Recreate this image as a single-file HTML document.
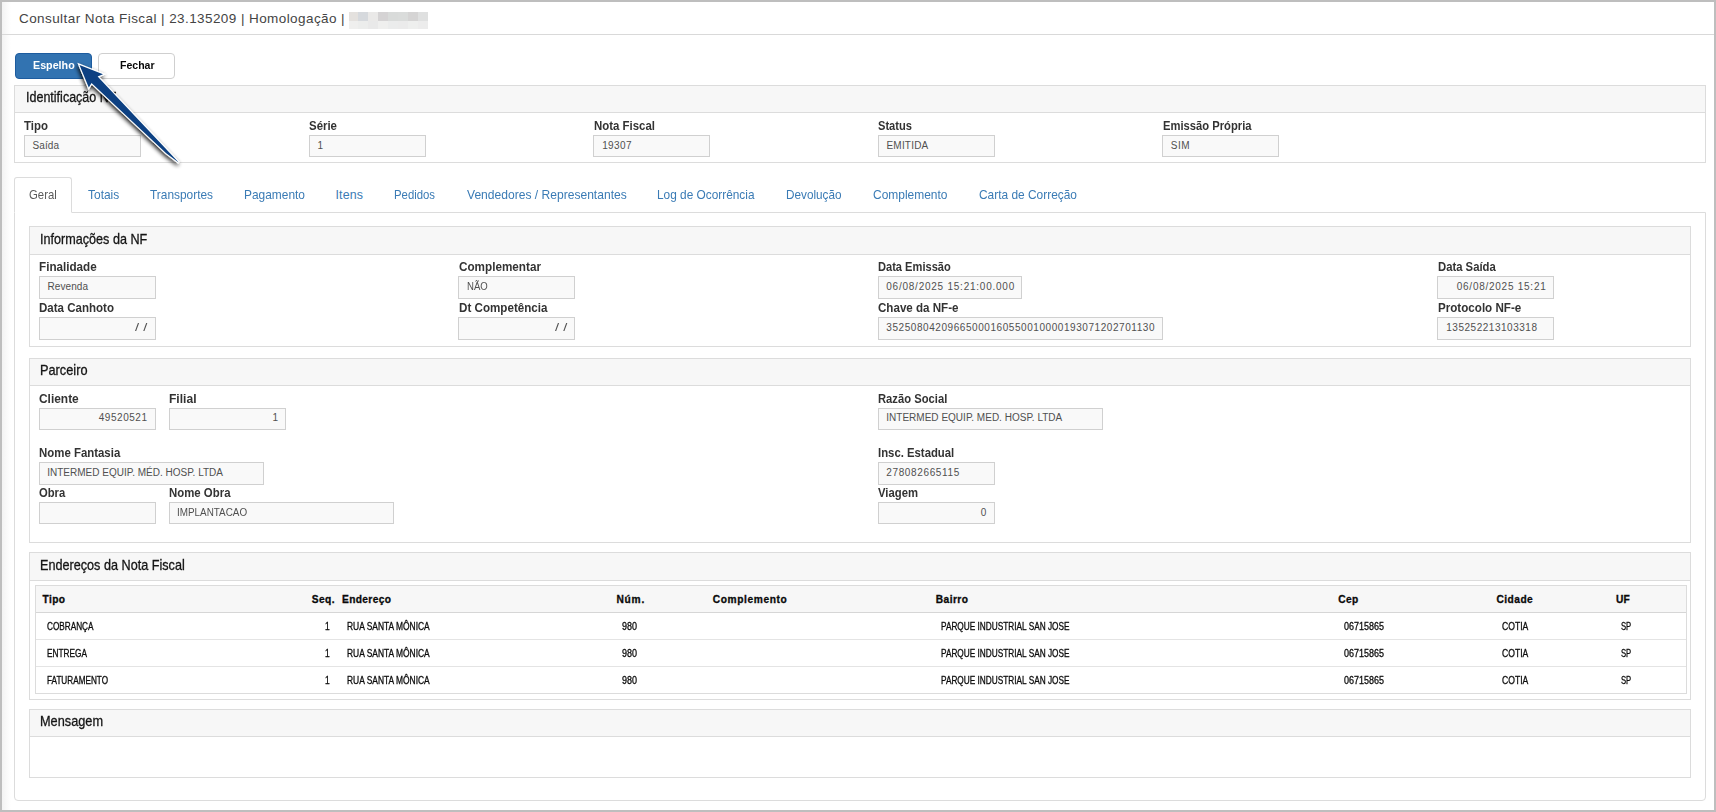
<!DOCTYPE html>
<html lang="pt-br"><head><meta charset="utf-8"><title>Consultar Nota Fiscal</title>
<style>
html,body{margin:0;padding:0;background:#fff}
body{width:1716px;height:812px;font-family:"Liberation Sans",sans-serif}
#page{position:relative;width:1716px;height:812px;overflow:hidden;background:#fff}
#frame{position:absolute;left:0;top:0;width:1716px;height:812px;box-sizing:border-box;border:2px solid #bebebe;background:linear-gradient(to right,#f3f3f3 0,#fff 9px) no-repeat 0 0/12px 100% #fff}
.b{position:absolute;box-sizing:border-box}
.inp{background:#f9f9f9;border:1px solid #d0d0d0}
.t{position:absolute;white-space:nowrap;line-height:20px;transform-origin:0 50%;display:block}
.title{font-size:13.5px;font-weight:400;color:#444444}
.btnp{font-size:11.4px;font-weight:700;color:#ffffff}
.btnd{font-size:11.4px;font-weight:700;color:#080808}
.ptitle{font-size:14.2px;font-weight:400;color:#151515;-webkit-text-stroke:0.3px #151515}
.label{font-size:12.2px;font-weight:700;color:#333333}
.val{font-size:10.0px;font-weight:400;color:#505050}
.tab{font-size:12.4px;font-weight:400;color:#3a7bb5}
.taba{font-size:12.4px;font-weight:400;color:#5a5a5a}
.th{font-size:10.2px;font-weight:700;color:#0a0a0a;-webkit-text-stroke:0.3px #0a0a0a}
.td{font-size:10.2px;font-weight:400;color:#0c0c0c;-webkit-text-stroke:0.3px #0c0c0c}
</style></head><body>
<div id="page">
<div id="frame"></div>
<div class="b hline" style="left:2px;top:34px;width:1712px;height:1px;background:#d9d9d9"></div>
<div class="b px" style="left:349px;top:12px;width:9px;height:9px;background:#e4e1de"></div>
<div class="b px" style="left:349px;top:21px;width:9px;height:8px;background:#efefee"></div>
<div class="b px" style="left:358px;top:12px;width:10px;height:9px;background:#d6d9dd"></div>
<div class="b px" style="left:358px;top:21px;width:10px;height:8px;background:#ecedec"></div>
<div class="b px" style="left:368px;top:12px;width:10px;height:9px;background:#eae9e8"></div>
<div class="b px" style="left:368px;top:21px;width:10px;height:8px;background:#e9e9e9"></div>
<div class="b px" style="left:378px;top:12px;width:10px;height:9px;background:#d5d3d4"></div>
<div class="b px" style="left:378px;top:21px;width:10px;height:8px;background:#efefee"></div>
<div class="b px" style="left:388px;top:12px;width:10px;height:9px;background:#d9dbda"></div>
<div class="b px" style="left:388px;top:21px;width:10px;height:8px;background:#ebecec"></div>
<div class="b px" style="left:398px;top:12px;width:10px;height:9px;background:#dadcdb"></div>
<div class="b px" style="left:398px;top:21px;width:10px;height:8px;background:#ebebeb"></div>
<div class="b px" style="left:408px;top:12px;width:10px;height:9px;background:#d5d4d4"></div>
<div class="b px" style="left:408px;top:21px;width:10px;height:8px;background:#eeefee"></div>
<div class="b px" style="left:418px;top:12px;width:10px;height:9px;background:#dfe0e0"></div>
<div class="b px" style="left:418px;top:21px;width:10px;height:8px;background:#ececec"></div>
<div class="b btn btn-primary" style="left:15px;top:53px;width:77px;height:26px;background:#3273b1;border:1px solid #1d5c9f;border-radius:4px"></div>
<div class="b btn btn-default" style="left:98px;top:53px;width:77px;height:26px;background:#fff;border:1px solid #cfcfcf;border-radius:4px"></div>
<div class="b panel" style="left:14px;top:85px;width:1692px;height:78px;border:1px solid #dcdcdc;background:#fff;border-radius:0"></div>
<div class="b panel-heading" style="left:15px;top:86px;width:1690px;height:27px;background:#f7f7f7;border-bottom:1px solid #dcdcdc"></div>
<div class="b inp" style="left:24px;top:135px;width:117px;height:22px;"></div>
<div class="b inp" style="left:309px;top:135px;width:117px;height:22px;"></div>
<div class="b inp" style="left:593px;top:135px;width:117px;height:22px;"></div>
<div class="b inp" style="left:878px;top:135px;width:117px;height:22px;"></div>
<div class="b inp" style="left:1162px;top:135px;width:117px;height:22px;"></div>
<div class="b tab-content" style="left:14px;top:212px;width:1692px;height:589px;border:1px solid #dcdcdc;border-radius:0 0 4px 4px;background:#fff"></div>
<div class="b tab-active" style="left:14px;top:177px;width:58px;height:36px;border:1px solid #dcdcdc;border-bottom:1px solid #fff;border-radius:3px 3px 0 0;background:#fff"></div>
<div class="b panel" style="left:29px;top:226px;width:1662px;height:121px;border:1px solid #dcdcdc;background:#fff;border-radius:0"></div>
<div class="b panel-heading" style="left:30px;top:227px;width:1660px;height:28px;background:#f7f7f7;border-bottom:1px solid #dcdcdc"></div>
<div class="b inp" style="left:39px;top:276px;width:117px;height:23px;"></div>
<div class="b inp" style="left:458px;top:276px;width:117px;height:23px;"></div>
<div class="b inp" style="left:878px;top:276px;width:144px;height:23px;"></div>
<div class="b inp" style="left:1437px;top:276px;width:117px;height:23px;"></div>
<div class="b inp" style="left:39px;top:317px;width:117px;height:23px;"></div>
<div class="b inp" style="left:458px;top:317px;width:117px;height:23px;"></div>
<div class="b inp" style="left:878px;top:317px;width:285px;height:23px;"></div>
<div class="b inp" style="left:1437px;top:317px;width:117px;height:23px;"></div>
<div class="b panel" style="left:29px;top:358px;width:1662px;height:185px;border:1px solid #dcdcdc;background:#fff;border-radius:0"></div>
<div class="b panel-heading" style="left:30px;top:359px;width:1660px;height:27px;background:#f7f7f7;border-bottom:1px solid #dcdcdc"></div>
<div class="b inp" style="left:39px;top:408px;width:117px;height:22px;"></div>
<div class="b inp" style="left:169px;top:408px;width:117px;height:22px;"></div>
<div class="b inp" style="left:878px;top:408px;width:225px;height:22px;"></div>
<div class="b inp" style="left:39px;top:462px;width:225px;height:23px;"></div>
<div class="b inp" style="left:878px;top:462px;width:117px;height:23px;"></div>
<div class="b inp" style="left:39px;top:502px;width:117px;height:22px;"></div>
<div class="b inp" style="left:169px;top:502px;width:225px;height:22px;"></div>
<div class="b inp" style="left:878px;top:502px;width:117px;height:22px;"></div>
<div class="b panel" style="left:29px;top:552px;width:1662px;height:148px;border:1px solid #dcdcdc;background:#fff;border-radius:0"></div>
<div class="b panel-heading" style="left:30px;top:553px;width:1660px;height:28px;background:#f7f7f7;border-bottom:1px solid #dcdcdc"></div>
<div class="b table" style="left:35px;top:585px;width:1652px;height:109px;border:1px solid #dcdcdc;background:#fff"></div>
<div class="b thead" style="left:36px;top:586px;width:1650px;height:26px;background:#f7f7f7"></div>
<div class="b rl" style="left:36px;top:612px;width:1650px;height:1px;background:#d6d6d6"></div>
<div class="b rl" style="left:36px;top:639px;width:1650px;height:1px;background:#e4e4e4"></div>
<div class="b rl" style="left:36px;top:666px;width:1650px;height:1px;background:#e4e4e4"></div>
<div class="b panel" style="left:29px;top:709px;width:1662px;height:69px;border:1px solid #dcdcdc;background:#fff;border-radius:0"></div>
<div class="b panel-heading" style="left:30px;top:710px;width:1660px;height:27px;background:#f7f7f7;border-bottom:1px solid #dcdcdc"></div>
<span class="t title" id="t0" style="left:19.00px;top:8.5px;letter-spacing:0.420px;">Consultar Nota Fiscal | 23.135209 | Homologação |</span>
<span class="t btnp" id="t1" style="left:33.30px;top:55.0px;transform:scaleX(0.9410);">Espelho</span>
<span class="t btnd" id="t2" style="left:119.50px;top:55.0px;transform:scaleX(0.9261);">Fechar</span>
<span class="t ptitle" id="t3" style="left:25.50px;top:87.0px;transform:scaleX(0.8822);">Identificação NF</span>
<span class="t label" id="t4" style="left:24.30px;top:116.0px;transform:scaleX(0.9373);">Tipo</span>
<span class="t label" id="t5" style="left:309.00px;top:116.0px;transform:scaleX(0.9387);">Série</span>
<span class="t label" id="t6" style="left:593.50px;top:116.0px;transform:scaleX(0.9380);">Nota Fiscal</span>
<span class="t label" id="t7" style="left:878.00px;top:116.0px;transform:scaleX(0.9128);">Status</span>
<span class="t label" id="t8" style="left:1162.50px;top:116.0px;transform:scaleX(0.9201);">Emissão Própria</span>
<span class="t val" id="t9" style="left:32.60px;top:135.5px;letter-spacing:0.065px;">Saída</span>
<span class="t val" id="t10" style="left:317.60px;top:135.5px;letter-spacing:0.000px;">1</span>
<span class="t val" id="t11" style="left:602.20px;top:135.5px;letter-spacing:0.372px;">19307</span>
<span class="t val" id="t12" style="left:886.50px;top:135.5px;letter-spacing:0.198px;">EMITIDA</span>
<span class="t val" id="t13" style="left:1170.75px;top:135.5px;letter-spacing:0.484px;">SIM</span>
<span class="t taba" id="t14" style="left:29.25px;top:185.0px;transform:scaleX(0.9155);">Geral</span>
<span class="t tab" id="t15" style="left:88.00px;top:185.0px;transform:scaleX(0.9653);">Totais</span>
<span class="t tab" id="t16" style="left:150.25px;top:185.0px;transform:scaleX(0.9595);">Transportes</span>
<span class="t tab" id="t17" style="left:243.50px;top:185.0px;transform:scaleX(0.9625);">Pagamento</span>
<span class="t tab" id="t18" style="left:335.50px;top:185.0px;letter-spacing:0.156px;">Itens</span>
<span class="t tab" id="t19" style="left:394.25px;top:185.0px;transform:scaleX(0.9156);">Pedidos</span>
<span class="t tab" id="t20" style="left:466.50px;top:185.0px;transform:scaleX(0.9744);">Vendedores / Representantes</span>
<span class="t tab" id="t21" style="left:657.00px;top:185.0px;transform:scaleX(0.9563);">Log de Ocorrência</span>
<span class="t tab" id="t22" style="left:786.00px;top:185.0px;transform:scaleX(0.9477);">Devolução</span>
<span class="t tab" id="t23" style="left:873.00px;top:185.0px;transform:scaleX(0.9658);">Complemento</span>
<span class="t tab" id="t24" style="left:979.00px;top:185.0px;transform:scaleX(0.9614);">Carta de Correção</span>
<span class="t ptitle" id="t25" style="left:39.95px;top:229.0px;transform:scaleX(0.8889);">Informações da NF</span>
<span class="t label" id="t26" style="left:38.75px;top:257.0px;transform:scaleX(0.9580);">Finalidade</span>
<span class="t label" id="t27" style="left:458.50px;top:257.0px;transform:scaleX(0.9608);">Complementar</span>
<span class="t label" id="t28" style="left:878.00px;top:257.0px;transform:scaleX(0.9101);">Data Emissão</span>
<span class="t label" id="t29" style="left:1437.50px;top:257.0px;transform:scaleX(0.9265);">Data Saída</span>
<span class="t val" id="t30" style="left:47.50px;top:276.5px;letter-spacing:0.078px;">Revenda</span>
<span class="t val" id="t31" style="left:466.75px;top:276.5px;transform:scaleX(0.9575);">NÃO</span>
<span class="t val" id="t32" style="left:886.25px;top:276.5px;letter-spacing:0.763px;">06/08/2025 15:21:00.000</span>
<span class="t val" id="t33" style="left:1456.75px;top:276.5px;letter-spacing:0.743px;">06/08/2025 15:21</span>
<span class="t label" id="t34" style="left:38.75px;top:298.0px;transform:scaleX(0.9467);">Data Canhoto</span>
<span class="t label" id="t35" style="left:458.50px;top:298.0px;transform:scaleX(0.9539);">Dt Competência</span>
<span class="t label" id="t36" style="left:878.00px;top:298.0px;transform:scaleX(0.9507);">Chave da NF-e</span>
<span class="t label" id="t37" style="left:1437.50px;top:298.0px;transform:scaleX(0.9531);">Protocolo NF-e</span>
<span class="t val" id="t38" style="left:135.25px;top:317.5px;transform:scaleX(1.4682);">/ /</span>
<span class="t val" id="t39" style="left:554.75px;top:317.5px;transform:scaleX(1.4682);">/ /</span>
<span class="t val" id="t40" style="left:886.25px;top:317.5px;letter-spacing:0.565px;">35250804209665000160550010000193071202701130</span>
<span class="t val" id="t41" style="left:1446.25px;top:317.5px;letter-spacing:0.522px;">135252213103318</span>
<span class="t ptitle" id="t42" style="left:39.95px;top:360.0px;transform:scaleX(0.8989);">Parceiro</span>
<span class="t label" id="t43" style="left:38.75px;top:389.0px;transform:scaleX(0.9781);">Cliente</span>
<span class="t label" id="t44" style="left:169.25px;top:389.0px;transform:scaleX(0.9899);">Filial</span>
<span class="t label" id="t45" style="left:878.00px;top:389.0px;transform:scaleX(0.9210);">Razão Social</span>
<span class="t val" id="t46" style="left:98.75px;top:407.5px;letter-spacing:0.536px;">49520521</span>
<span class="t val" id="t47" style="left:272.50px;top:407.5px;letter-spacing:0.000px;">1</span>
<span class="t val" id="t48" style="left:886.25px;top:407.5px;letter-spacing:0.014px;">INTERMED EQUIP. MED. HOSP. LTDA</span>
<span class="t label" id="t49" style="left:38.75px;top:443.0px;transform:scaleX(0.9371);">Nome Fantasia</span>
<span class="t label" id="t50" style="left:878.00px;top:443.0px;transform:scaleX(0.9302);">Insc. Estadual</span>
<span class="t val" id="t51" style="left:47.25px;top:462.5px;letter-spacing:0.005px;">INTERMED EQUIP. MÉD. HOSP. LTDA</span>
<span class="t val" id="t52" style="left:886.25px;top:462.5px;letter-spacing:0.636px;">278082665115</span>
<span class="t label" id="t53" style="left:38.75px;top:483.0px;transform:scaleX(0.9226);">Obra</span>
<span class="t label" id="t54" style="left:169.25px;top:483.0px;transform:scaleX(0.9360);">Nome Obra</span>
<span class="t label" id="t55" style="left:878.00px;top:483.0px;transform:scaleX(0.9272);">Viagem</span>
<span class="t val" id="t56" style="left:176.90px;top:502.5px;transform:scaleX(0.9882);">IMPLANTACAO</span>
<span class="t val" id="t57" style="left:980.75px;top:502.5px;letter-spacing:0.000px;">0</span>
<span class="t ptitle" id="t58" style="left:39.95px;top:555.0px;transform:scaleX(0.8910);">Endereços da Nota Fiscal</span>
<span class="t th" id="t59" style="left:42.50px;top:589.5px;letter-spacing:0.391px;">Tipo</span>
<span class="t th" id="t60" style="left:311.75px;top:589.5px;letter-spacing:0.411px;">Seq.</span>
<span class="t th" id="t61" style="left:342.00px;top:589.5px;letter-spacing:0.366px;">Endereço</span>
<span class="t th" id="t62" style="left:616.50px;top:589.5px;letter-spacing:0.760px;">Núm.</span>
<span class="t th" id="t63" style="left:712.75px;top:589.5px;letter-spacing:0.608px;">Complemento</span>
<span class="t th" id="t64" style="left:935.75px;top:589.5px;letter-spacing:0.447px;">Bairro</span>
<span class="t th" id="t65" style="left:1338.25px;top:589.5px;letter-spacing:0.375px;">Cep</span>
<span class="t th" id="t66" style="left:1496.50px;top:589.5px;letter-spacing:0.456px;">Cidade</span>
<span class="t th" id="t67" style="left:1616.00px;top:589.5px;letter-spacing:0.156px;">UF</span>
<span class="t td" id="t68" style="left:47.25px;top:616.5px;transform:scaleX(0.8052);">COBRANÇA</span>
<span class="t td" id="t69" style="left:325.00px;top:616.5px;transform:scaleX(0.8295);">1</span>
<span class="t td" id="t70" style="left:346.75px;top:616.5px;transform:scaleX(0.8274);">RUA SANTA MÔNICA</span>
<span class="t td" id="t71" style="left:621.50px;top:616.5px;transform:scaleX(0.8824);">980</span>
<span class="t td" id="t72" style="left:940.75px;top:616.5px;transform:scaleX(0.8106);">PARQUE INDUSTRIAL SAN JOSE</span>
<span class="t td" id="t73" style="left:1343.50px;top:616.5px;transform:scaleX(0.8825);">06715865</span>
<span class="t td" id="t74" style="left:1501.75px;top:616.5px;transform:scaleX(0.8430);">COTIA</span>
<span class="t td" id="t75" style="left:1620.75px;top:616.5px;transform:scaleX(0.7540);">SP</span>
<span class="t td" id="t76" style="left:47.25px;top:643.5px;transform:scaleX(0.8122);">ENTREGA</span>
<span class="t td" id="t77" style="left:325.00px;top:643.5px;transform:scaleX(0.8295);">1</span>
<span class="t td" id="t78" style="left:346.75px;top:643.5px;transform:scaleX(0.8274);">RUA SANTA MÔNICA</span>
<span class="t td" id="t79" style="left:621.50px;top:643.5px;transform:scaleX(0.8824);">980</span>
<span class="t td" id="t80" style="left:940.75px;top:643.5px;transform:scaleX(0.8106);">PARQUE INDUSTRIAL SAN JOSE</span>
<span class="t td" id="t81" style="left:1343.50px;top:643.5px;transform:scaleX(0.8825);">06715865</span>
<span class="t td" id="t82" style="left:1501.75px;top:643.5px;transform:scaleX(0.8430);">COTIA</span>
<span class="t td" id="t83" style="left:1620.75px;top:643.5px;transform:scaleX(0.7540);">SP</span>
<span class="t td" id="t84" style="left:47.25px;top:670.5px;transform:scaleX(0.8021);">FATURAMENTO</span>
<span class="t td" id="t85" style="left:325.00px;top:670.5px;transform:scaleX(0.8295);">1</span>
<span class="t td" id="t86" style="left:346.75px;top:670.5px;transform:scaleX(0.8274);">RUA SANTA MÔNICA</span>
<span class="t td" id="t87" style="left:621.50px;top:670.5px;transform:scaleX(0.8824);">980</span>
<span class="t td" id="t88" style="left:940.75px;top:670.5px;transform:scaleX(0.8106);">PARQUE INDUSTRIAL SAN JOSE</span>
<span class="t td" id="t89" style="left:1343.50px;top:670.5px;transform:scaleX(0.8825);">06715865</span>
<span class="t td" id="t90" style="left:1501.75px;top:670.5px;transform:scaleX(0.8430);">COTIA</span>
<span class="t td" id="t91" style="left:1620.75px;top:670.5px;transform:scaleX(0.7540);">SP</span>
<span class="t ptitle" id="t92" style="left:39.95px;top:711.0px;transform:scaleX(0.8976);">Mensagem</span>
<svg class="arrow" width="150" height="140" viewBox="60 45 150 140" style="position:absolute;left:60px;top:45px;overflow:visible">
<defs><filter id="ds" x="-30%" y="-30%" width="160%" height="160%"><feGaussianBlur in="SourceAlpha" stdDeviation="2.1"/><feOffset dx="-0.7" dy="1.7" result="o"/><feComponentTransfer><feFuncA type="linear" slope="0.9"/></feComponentTransfer><feMerge><feMergeNode/><feMergeNode in="SourceGraphic"/></feMerge></filter></defs>
<path filter="url(#ds)" d="M79.5,64.9 L103,74.2 L97.6,76.6 L179,162.8 L166.2,153.2 L91.5,83 L88.8,87.6 Z" fill="#0a4182" stroke="#ffffff" stroke-width="2.4" stroke-linejoin="miter" stroke-miterlimit="6" paint-order="stroke fill"/>
</svg>
</div>
</body></html>
